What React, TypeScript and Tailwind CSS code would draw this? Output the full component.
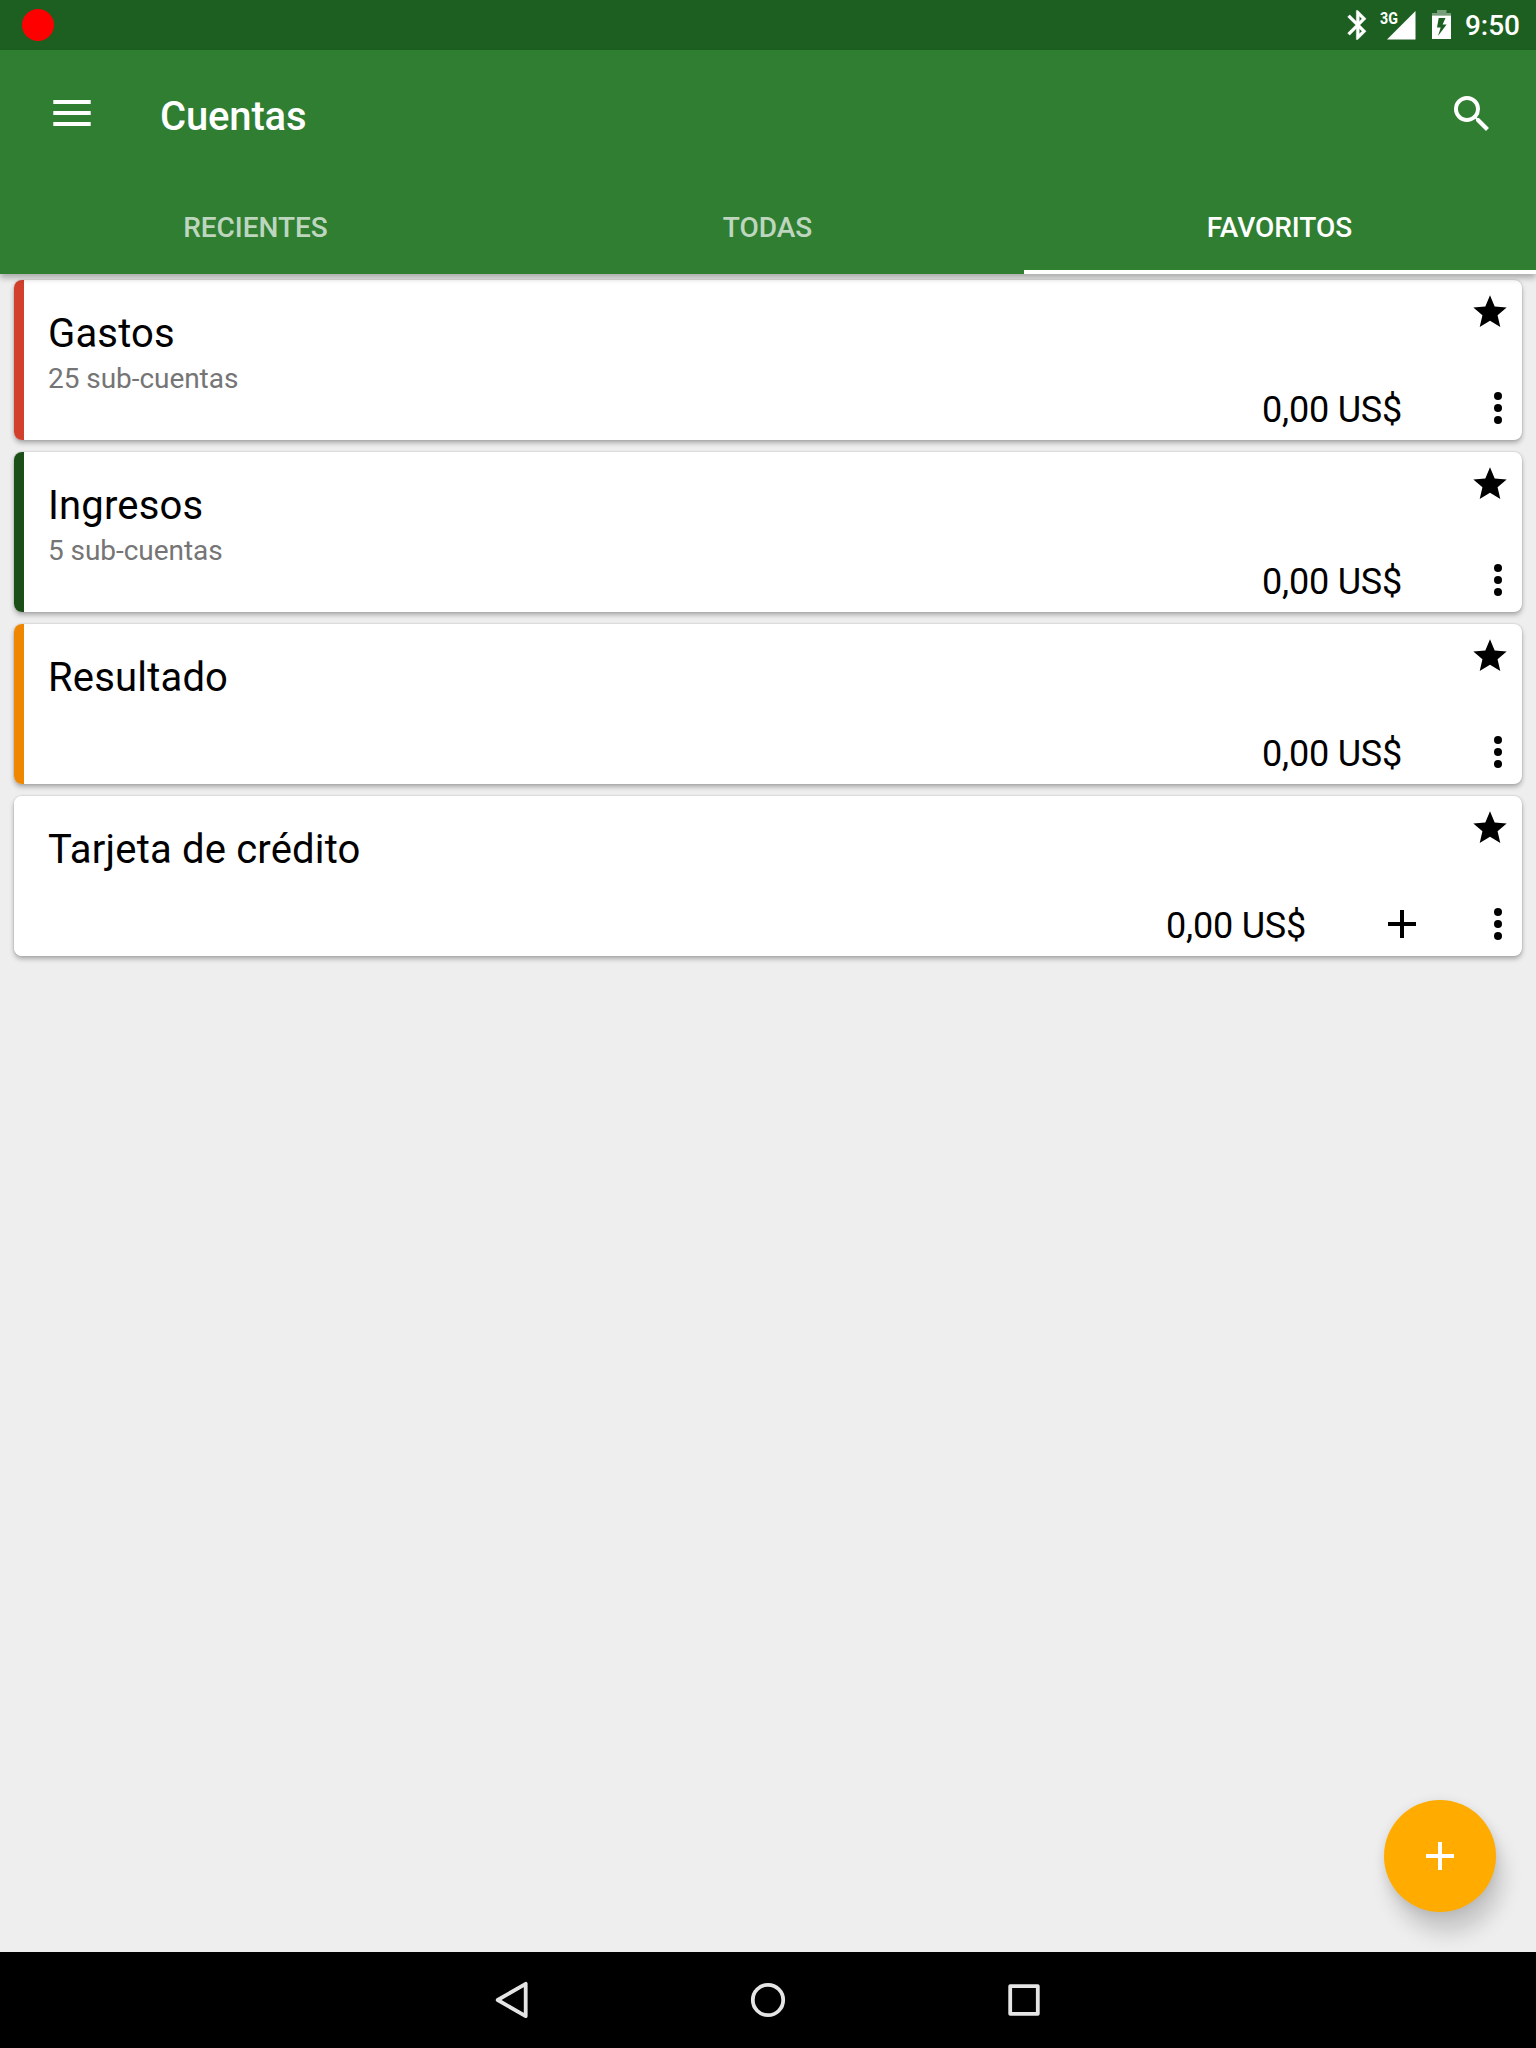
type Account = { name: string; sub?: string; balance: string; stripe: string; canAdd?: boolean };

const accounts: Account[] = [
  { name: "Gastos", sub: "25 sub-cuentas", balance: "0,00 US$", stripe: "bg-[#d23f2d]" },
  { name: "Ingresos", sub: "5 sub-cuentas", balance: "0,00 US$", stripe: "bg-[#1c4f18]" },
  { name: "Resultado", balance: "0,00 US$", stripe: "bg-[#ee8600]" },
  { name: "Tarjeta de crédito", balance: "0,00 US$", stripe: "bg-white", canAdd: true },
];

function StatusBar() {
  return (
    <div className="flex h-[50px] items-center justify-between bg-[#1c5f20] pl-[22px] pr-4 text-white">
      <div className="size-8 rounded-full bg-[#ff0000]" />
      <div className="flex h-full items-center">
        <svg className="mr-[5px] h-[50px] w-[30px]" viewBox="0 0 30 50" fill="currentColor">
          <g transform="translate(-4.6 7.6) scale(1.45)">
            <path
              stroke="currentColor"
              strokeWidth=".3"
              d="M17.71 7.71L12 2h-1v7.59L6.41 5 5 6.41 10.59 12 5 17.59 6.41 19 11 14.41V22h1l5.71-5.71-4.3-4.29 4.3-4.29zM13 5.83l1.88 1.88L13 9.59V5.83zm1.88 10.46L13 18.17v-3.76l1.88 1.88z"
            />
          </g>
        </svg>
        <div className="relative mr-4 h-[50px] w-[36px]">
          <span className="absolute left-0 top-[9px] origin-left scale-x-[0.84] text-[17px] font-bold leading-[18px]">3G</span>
          <svg className="absolute inset-0" width="36" height="50" viewBox="0 0 36 50" fill="currentColor">
            <path d="M7 39.5L35.5 11V39.5z" />
          </svg>
        </div>
        <svg className="mr-[13px]" width="20" height="50" viewBox="0 0 20 50" fill="currentColor">
          <path d="M5 10h9.500v3H19v2.500H0V13h5z" opacity=".4" />
          <path fillRule="evenodd" d="M0 15.500h19V39H0zM6.700 18L5 27.500h3.700L6 36l8.600-11.500h-4L13.500 18z" />
        </svg>
        <span className="pt-[2px] text-[28px] font-medium leading-[50px]">9:50</span>
      </div>
    </div>
  );
}

function Header() {
  return (
    <header className="relative z-10 h-56 bg-[#2f7e32] text-white shadow-[0_4px_6px_rgba(0,0,0,0.28)]">
      <div className="flex h-32 items-center pl-12 pr-10">
        <svg width="48" height="48" viewBox="0 0 48 48" fill="currentColor">
          <path d="M5.300 10h37.400v4H5.300zM5.300 21h37.400v4H5.300zM5.300 32h37.400v4H5.300z" />
        </svg>
        <h1 className="ml-16 flex-1 pt-[6px] text-[40px] font-medium leading-[48px] tracking-[-0.15px]">Cuentas</h1>
        <svg width="48" height="48" viewBox="0 0 24 24" fill="currentColor">
          <path d="M15.500 14h-.79l-.28-.27A6.471 6.471 0 0 0 16 9.500 6.500 6.500 0 1 0 9.500 16c1.610 0 3.090-.59 4.230-1.570l.27.280v.790l5 4.990L20.490 19l-4.990-5zm-6 0C7.010 14 5 11.990 5 9.500S7.010 5 9.500 5 14 7.010 14 9.500 11.990 14 9.500 14z" />
        </svg>
      </div>
      <nav className="grid h-24 grid-cols-3 text-center text-[28px] font-medium leading-[100px] tracking-[-0.03px]">
        <div className="pr-px text-white/70">RECIENTES</div>
        <div className="pr-px text-white/70">TODAS</div>
        <div className="h-24 border-b-4 border-white pr-px">FAVORITOS</div>
      </nav>
    </header>
  );
}

function AccountCard({ account }: { account: Account }) {
  return (
    <article className="flex h-40 overflow-hidden rounded-lg bg-white shadow-[0_3px_5px_rgba(0,0,0,0.28),0_0_2px_rgba(0,0,0,0.2)]">
      <div className={`w-[10px] ${account.stripe}`} />
      <div className="flex-1 pl-6 pt-[30px]">
        <h2 className="text-[40px] leading-[48px] tracking-[0.18px]">{account.name}</h2>
        {account.sub && (
          <p className="mt-[5px] text-[28px] leading-8 tracking-[-0.05px] text-[#757575]">{account.sub}</p>
        )}
      </div>
      <div className="flex flex-col items-end justify-between pb-2 pt-3">
        <svg className="mr-3" width="40" height="40" viewBox="0 0 24 24">
          <path d="M12 17.270L18.180 21l-1.640-7.030L22 9.240l-7.190-.61L12 2 9.190 8.630 2 9.240l5.460 4.730L5.820 21z" />
        </svg>
        <div className="flex items-center">
          <span className="pt-1 text-[36px] leading-[44px] tracking-[-0.22px]">{account.balance}</span>
          {account.canAdd && (
            <svg className="ml-[72px]" width="48" height="48" viewBox="0 0 24 24">
              <path d="M19 13h-6v6h-2v-6H5v-2h6V5h2v6h6z" />
            </svg>
          )}
          <svg className={account.canAdd ? "ml-12" : "ml-[72px]"} width="48" height="48" viewBox="0 0 24 24">
            <circle cx="12" cy="6" r="2" />
            <circle cx="12" cy="12" r="2" />
            <circle cx="12" cy="18" r="2" />
          </svg>
        </div>
      </div>
    </article>
  );
}

export default function App() {
  return (
    <div className="flex h-[2048px] w-[1536px] flex-col overflow-hidden bg-[#eeeeee] font-[Roboto,sans-serif] text-black">
      <StatusBar />
      <Header />
      <main className="relative flex flex-1 flex-col gap-3 overflow-hidden px-[14px] pt-[6px]">
        {accounts.map((a) => (
          <AccountCard key={a.name} account={a} />
        ))}
        <button className="absolute bottom-10 right-10 flex size-28 items-center justify-center rounded-full bg-[#ffab00] text-white shadow-[7px_21px_20px_rgba(0,0,0,0.16),0_2px_12px_rgba(0,0,0,0.1)]">
          <svg width="48" height="48" viewBox="0 0 24 24" fill="currentColor">
            <path d="M19 13h-6v6h-2v-6H5v-2h6V5h2v6h6z" />
          </svg>
        </button>
      </main>
      <footer className="flex h-24 items-center justify-center gap-52 bg-black">
        <svg width="48" height="48" viewBox="0 0 48 48" fill="none" stroke="#e5e5e5" strokeWidth="3.800" strokeLinejoin="round">
          <path d="M9.700 24L37.700 7.800V40.200z" />
        </svg>
        <svg width="48" height="48" viewBox="0 0 48 48" fill="none" stroke="#e5e5e5" strokeWidth="3.800">
          <circle cx="24" cy="24" r="15.200" />
        </svg>
        <svg width="48" height="48" viewBox="0 0 48 48" fill="none" stroke="#e5e5e5" strokeWidth="3.800" strokeLinejoin="round">
          <path d="M10.200 10.200h27.600v27.600H10.200z" />
        </svg>
      </footer>
    </div>
  );
}
